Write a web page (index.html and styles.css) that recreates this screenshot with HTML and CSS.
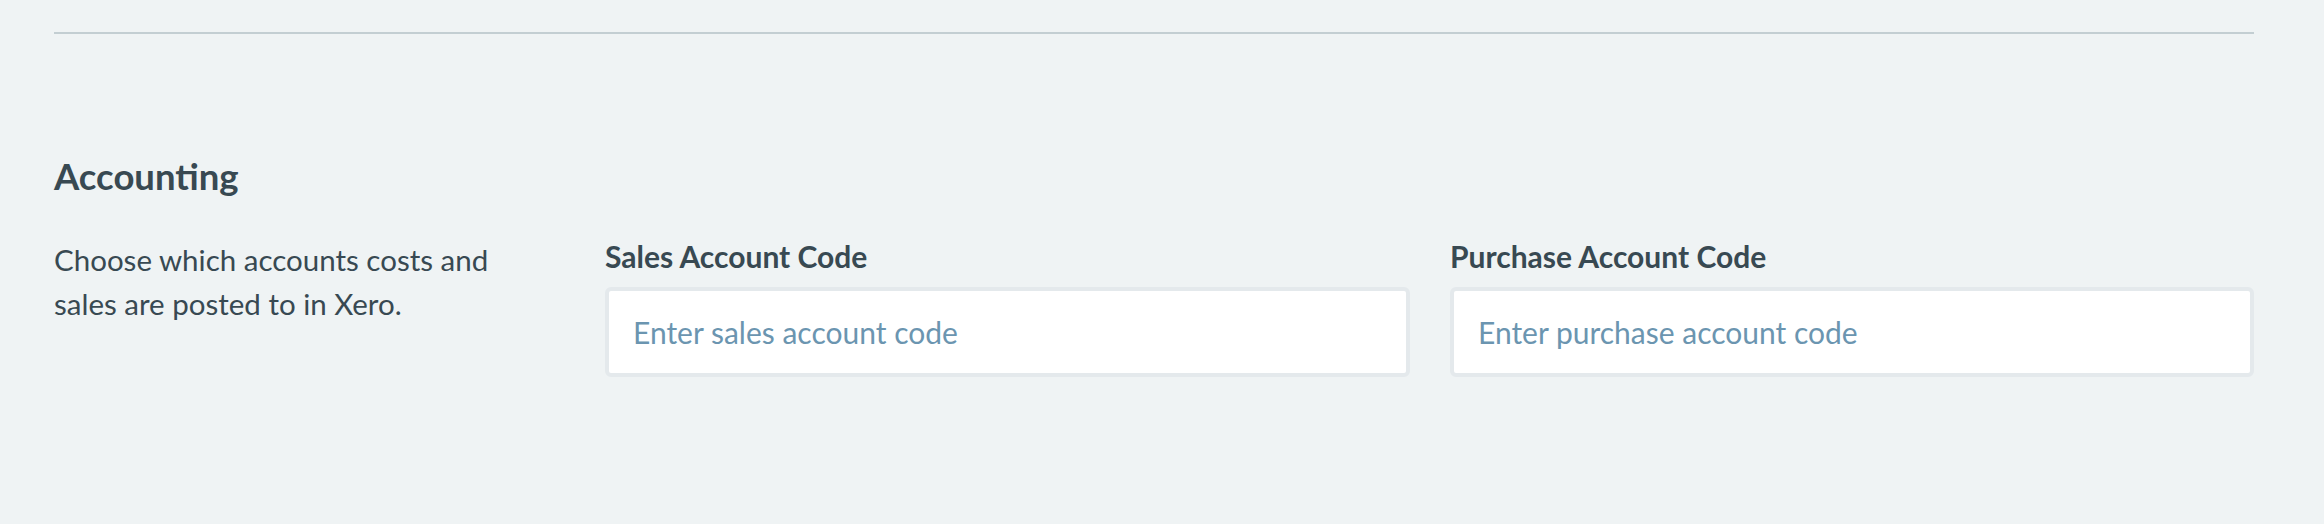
FILE: index.html
```html
<!DOCTYPE html>
<html lang="en">
<head>
<meta charset="utf-8">
<title>Accounting</title>
<link rel="stylesheet" href="styles.css">
</head>
<body>
<hr class="divider">
<section class="section">
  <h2 class="section-title">Accounting</h2>
  <div class="section-row">
    <p class="section-desc">Choose which accounts costs and sales are posted to in Xero.</p>
    <div class="field">
      <label class="field-label" for="sales">Sales Account Code</label>
      <input class="field-input" id="sales" type="text" placeholder="Enter sales account code">
    </div>
    <div class="field">
      <label class="field-label" for="purchase">Purchase Account Code</label>
      <input class="field-input" id="purchase" type="text" placeholder="Enter purchase account code">
    </div>
  </div>
</section>
</body>
</html>
```
FILE: styles.css
```css
html, body {
  margin: 0;
  padding: 0;
  background: #eff3f4;
  font-family: Lato, "Open Sans", sans-serif;
  color: #384952;
}

.divider {
  margin: 32px 70px 0 54px;
  border: 0;
  height: 2px;
  background: #c3ced2;
}

.section {
  padding: 0 70px 0 54px;
}

.section-title {
  margin: 120px 0 0;
  font-size: 36.5px;
  line-height: 44px;
  font-weight: 700;
}

.section-row {
  margin-top: 40px;
  display: grid;
  grid-template-columns: 511px 805px 1fr;
  column-gap: 40px;
  align-items: start;
}

.section-desc {
  margin: 0;
  font-size: 29.5px;
  line-height: 44px;
  padding-right: 20px;
}

.field {
  display: flex;
  flex-direction: column;
}

.field-label {
  font-size: 30px;
  line-height: 36px;
  font-weight: 700;
  margin-bottom: 13px;
}

.field-input {
  box-sizing: border-box;
  width: 100%;
  height: 90px;
  border: 4px solid #e4e9ec;
  border-radius: 6px;
  background: #fff;
  padding: 0 24px;
  font-family: Lato, "Open Sans", sans-serif;
  font-size: 30px;
  color: #384952;
  outline: none;
}

.field-input::placeholder {
  color: #6b95b0;
  opacity: 1;
}
```
